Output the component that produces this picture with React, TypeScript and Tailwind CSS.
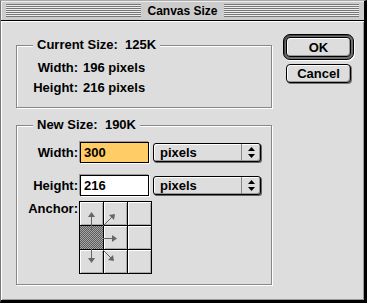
import React from "react";

const font = { fontFamily: '"Liberation Sans", Arial, sans-serif' };

function GroupLabel({ children }: { children: React.ReactNode }) {
  return (
    <span className="absolute left-[16px] -top-[8px] px-[4px] bg-[#dddddd] leading-[14px] text-[13px] font-bold text-black">
      {children}
    </span>
  );
}

function Popup() {
  return (
    <div className="ml-[4px] w-[108px] h-[19px] flex items-stretch rounded-[3px] border border-black bg-[#dddddd] shadow-[1px_1px_0_#666,inset_1px_1px_0_#ffffff,inset_-1px_-1px_0_#999999]">
      <span className="flex-1 pl-[6px] leading-[17px] text-[13px] font-bold">pixels</span>
      <span className="w-[19px] flex items-center justify-center border-l border-[#888888]">
        <svg width="7" height="11" viewBox="0 0 7 11">
          <path d="M3.5 0 L7 4 L0 4 Z" fill="#000" />
          <path d="M0 7 L7 7 L3.5 11 Z" fill="#000" />
        </svg>
      </span>
    </div>
  );
}

function Field({ value, bg }: { value: string; bg: string }) {
  return (
    <div
      className={`ml-[2px] w-[69px] h-[21px] border border-black pl-[3px] leading-[19px] text-[13px] font-bold shadow-[1px_1px_0_#ffffff,-1px_-1px_0_#999999] ${bg}`}
    >
      {value}
    </div>
  );
}

function Cell({ selected }: { selected?: boolean }) {
  return selected ? (
    <div className="w-[23px] h-[23px] bg-[repeating-conic-gradient(#5a5a5a_0_25%,#a8a8a8_0_50%)] bg-[length:2px_2px]" />
  ) : (
    <div className="w-[23px] h-[23px] bg-[#dddddd] shadow-[inset_1px_1px_0_#ffffff,inset_-1px_-1px_0_#aaaaaa]" />
  );
}

function AnchorGrid() {
  return (
    <div className="relative ml-[1px]">
      <div className="grid grid-cols-3 gap-px p-px bg-black w-[73px] h-[73px]">
        <Cell />
        <Cell />
        <Cell />
        <Cell selected />
        <Cell />
        <Cell />
        <Cell />
        <Cell />
        <Cell />
      </div>
      <svg className="absolute inset-0" width="73" height="73" viewBox="0 0 73 73">
        <g stroke="#666" strokeWidth="1" fill="none">
          <line x1="12.5" y1="30" x2="12.5" y2="15" />
          <line x1="24" y1="25" x2="33" y2="16" />
          <line x1="24" y1="37.5" x2="33" y2="37.5" />
          <line x1="12.5" y1="48" x2="12.5" y2="57" />
          <line x1="24" y1="49" x2="32" y2="57" />
        </g>
        <g fill="#666">
          <path d="M12.5 11 L16 16 L9 16 Z" />
          <path d="M36 13 L35 19 L30 14 Z" />
          <path d="M38 37.5 L33 34 L33 41 Z" />
          <path d="M12.5 62 L9 57 L16 57 Z" />
          <path d="M35 60 L29 59 L34 54 Z" />
        </g>
      </svg>
    </div>
  );
}

export default function App() {
  return (
    <div style={font} className="w-[367px] h-[303px] bg-white text-black">
      <div className="w-[367px] h-[303px] flex flex-col bg-[#dddddd] border-t border-l border-r-[3px] border-b-[3px] border-t-[#aaaaaa] border-l-[#777777] border-r-black border-b-black">
        {/* Title bar */}
        <div className="h-[20px] shrink-0 flex items-center px-[5px] bg-[#cccccc] border-b border-black shadow-[inset_1px_1px_0_#eeeeee]">
          <div className="flex-1 h-[13px] bg-[repeating-linear-gradient(to_bottom,#777777_0px,#777777_1px,#eeeeee_1px,#eeeeee_2px)]" />
          <span className="px-[6px] text-[12px] font-bold leading-[14px]">Canvas Size</span>
          <div className="flex-1 h-[13px] bg-[repeating-linear-gradient(to_bottom,#777777_0px,#777777_1px,#eeeeee_1px,#eeeeee_2px)]" />
        </div>

        {/* Body */}
        <div className="flex-1 flex items-start pl-[15px] shadow-[inset_1px_1px_0_#ffffff,inset_-1px_-1px_0_#999999]">
          {/* Left column */}
          <div className="mt-[24px] w-[256px] flex flex-col">
            <div className="relative h-[63px] border border-[#888888] shadow-[1px_1px_0_#ffffff,inset_1px_1px_0_#ffffff] pt-[12px]">
              <GroupLabel>Current Size:&nbsp; 125K</GroupLabel>
              <div className="flex leading-[20px] text-[13px] font-bold">
                <span className="w-[61px] text-right">Width:</span>
                <span className="ml-[5px]">196 pixels</span>
              </div>
              <div className="flex leading-[20px] text-[13px] font-bold">
                <span className="w-[61px] text-right">Height:</span>
                <span className="ml-[5px]">216 pixels</span>
              </div>
            </div>

            <div className="relative mt-[17px] h-[160px] border border-[#888888] shadow-[1px_1px_0_#ffffff,inset_1px_1px_0_#ffffff] pt-[16px]">
              <GroupLabel>New Size:&nbsp; 190K</GroupLabel>
              <div className="flex items-center h-[21px] text-[13px] font-bold">
                <span className="w-[61px] text-right">Width:</span>
                <Field value="300" bg="bg-[#ffcc66]" />
                <Popup />
              </div>
              <div className="flex items-center h-[21px] mt-[12px] text-[13px] font-bold">
                <span className="w-[61px] text-right">Height:</span>
                <Field value="216" bg="bg-white" />
                <Popup />
              </div>
              <div className="flex items-start mt-[5px] text-[13px] font-bold">
                <span className="w-[61px] text-right leading-[14px] mt-[1px]">Anchor:</span>
                <AnchorGrid />
              </div>
            </div>
          </div>

          {/* Right column */}
          <div className="ml-[11px] mt-[13px] flex flex-col">
            <div className="w-[71px] h-[26px] p-[2px] rounded-[7px] border border-black bg-[#6e6e6e] shadow-[inset_1px_1px_0_#444444,1px_1px_0_#ffffff]">
              <div className="w-full h-full rounded-[4px] border border-black bg-[#dddddd] shadow-[inset_1px_1px_0_#ffffff,inset_-1px_-1px_0_#999999] flex items-center justify-center text-[13px] font-bold leading-none">
                OK
              </div>
            </div>
            <div className="ml-[3px] mt-[4px] w-[65px] h-[19px] rounded-[4px] border border-black bg-[#dddddd] shadow-[1px_1px_0_#777777,inset_1px_1px_0_#ffffff,inset_-1px_-1px_0_#999999] flex items-center justify-center text-[13px] font-bold leading-none">
              Cancel
            </div>
          </div>
        </div>
      </div>
    </div>
  );
}
